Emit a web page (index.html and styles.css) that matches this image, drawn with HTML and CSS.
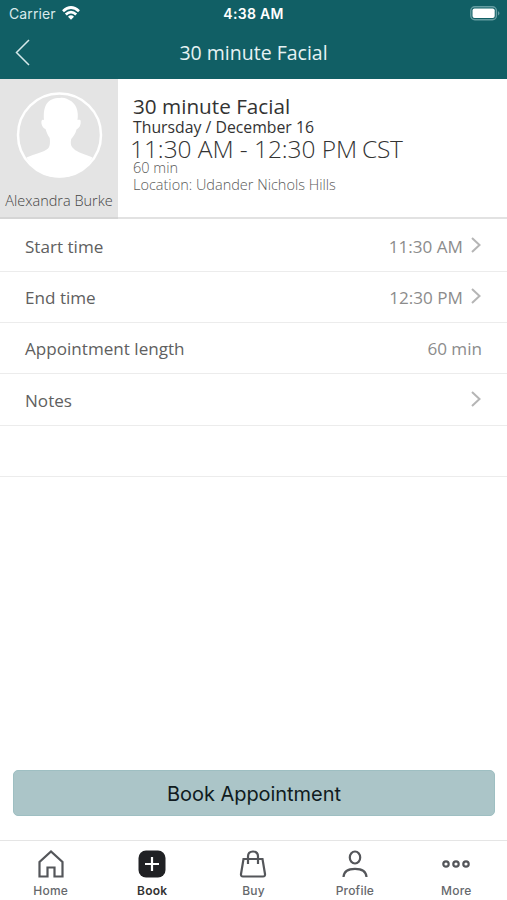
FILE: index.html
```html
<!DOCTYPE html>
<html lang="en">
<head>
<meta charset="utf-8">
<title>30 minute Facial</title>
<link rel="stylesheet" href="styles.css">
</head>
<body>
<div class="app">
  <header class="top">
    <div class="status">
      <div class="carrier"><span>Carrier</span>
        <svg width="18" height="14" viewBox="0 0 18 14" fill="none" stroke="#fff" stroke-width="2.7"><path d="M1 5.2Q9-2.2 17 5.2M3.8 8.6Q9 3.7 14.2 8.6"/><path d="M9 13.8 6 10.700Q9 8 12 10.700Z" fill="#fff" stroke="none"/></svg>
      </div>
      <span class="clock">4:38 AM</span>
      <svg class="battery" width="31" height="15" viewBox="0 0 31 15"><rect x=".8" y=".8" width="25.6" height="13" rx="4" fill="none" stroke="#659da2" stroke-width="1.4"/><rect x="2.5" y="2.6" width="22.2" height="9.4" rx="2" fill="#fff"/><path d="M28 5Q31 7.3 28 9.6Z" fill="#659da2"/></svg>
    </div>
    <div class="navbar">
      <svg class="back" width="15" height="27" viewBox="0 0 15 27" fill="none" stroke="#d5e9ea" stroke-width="1.5"><path d="M14 1 1.5 13.5 14 26"/></svg>
      <span class="nav-title">30 minute Facial</span>
    </div>
  </header>
  <section class="summary">
    <div class="staff">
      <svg width="88" height="88" viewBox="0 0 88 88"><circle cx="44.500" cy="44" r="41.500" fill="none" stroke="#fff" stroke-width="2.500"/><path d="M44.500 86.500C30 86.500 18 79 11.500 66.500C20 62.500 29 61.500 33 57.500C35.500 55 35 50 34.700 47C32.500 44 31.500 41 30.500 38C27.500 37 26 33 26.500 30C27 28.500 28 28.500 29 29C28 15 32 7 45 7C49 6 52 8 54 9C61 12 64 20 62.500 29C64 28.500 65.500 28.500 65.700 30C66 34 64.500 37 61.500 38.500C60.500 43 58.500 45 56.200 48C55.500 52 55.500 55 58.500 57.500C62 61.500 70 63 77.500 66.500C71 79 59 86.500 44.500 86.500Z" fill="#fff"/></svg>
      <span class="staff-name">Alexandra Burke</span>
    </div>
    <div class="details">
      <h1>30 minute Facial</h1>
      <div class="date">Thursday / December 16</div>
      <div class="time">11:30 AM - 12:30 PM<span class="zone">CST</span></div>
      <div class="meta length">60 min</div>
      <div class="meta">Location: Udander Nichols Hills</div>
    </div>
  </section>
  <main class="rows">
    <div class="row"><span>Start time</span><span class="value">11:30 AM</span><svg class="chev" width="10" height="16" viewBox="0 0 10 16"><path d="M1 1 8.500 8 1 15"/></svg></div>
    <div class="row"><span>End time</span><span class="value">12:30 PM</span><svg class="chev" width="10" height="16" viewBox="0 0 10 16"><path d="M1 1 8.500 8 1 15"/></svg></div>
    <div class="row"><span>Appointment length</span><span class="value last">60 min</span></div>
    <div class="row"><span>Notes</span><span class="value"></span><svg class="chev" width="10" height="16" viewBox="0 0 10 16"><path d="M1 1 8.500 8 1 15"/></svg></div>
    <div class="row"></div>
  </main>
  <button class="book"><span>Book Appointment</span></button>
  <nav class="tabs">
    <div class="tab"><svg viewBox="0 0 30 30"><path d="M3.500 27.500V13L15 2.500 26.500 13V27.500H18.500V18.500H11.500V27.500Z"/></svg><span>Home</span></div>
    <div class="tab active"><svg viewBox="0 0 30 30"><rect x="1.500" y="1.500" width="27" height="27" rx="7.500" fill="#202124" stroke="none"/><path d="M15 8V22M8 15H22" stroke="#fff"/></svg><span>Book</span></div>
    <div class="tab"><svg viewBox="0 0 30 30"><path d="M5.500 10H24.500L27 25Q27.300 27.500 25 27.500H5Q2.700 27.500 3 25ZM10 15V7.500Q10 2.500 15 2.500T20 7.500V15"/></svg><span>Buy</span></div>
    <div class="tab"><svg viewBox="0 0 30 30"><ellipse cx="15" cy="8.500" rx="5.200" ry="6"/><path d="M3.500 28Q4 19.800 15 19.800T26.500 28"/></svg><span>Profile</span></div>
    <div class="tab"><svg viewBox="0 0 30 30"><circle cx="5" cy="15" r="2.700"/><circle cx="15" cy="15" r="2.700"/><circle cx="25" cy="15" r="2.700"/></svg><span>More</span></div>
  </nav>
</div>
</body>
</html>
```
FILE: styles.css
```css
* { box-sizing: border-box; }
body { margin: 0; background: #fff; font-family: "Open Sans", sans-serif; }
.app { width: 507px; height: 900px; display: flex; flex-direction: column; overflow: hidden; }
.top { height: 79px; background: #115f65; color: #fff; flex: none; }
.status { height: 28px; padding: 0 6px 0 9px; display: grid; grid-template-columns: 1fr auto 1fr; align-items: center; font-family: Inter, sans-serif; font-size: 14px; line-height: 28px; }
.carrier { display: flex; align-items: center; gap: 6px; color: #d9eaeb; letter-spacing: .1px; }
.carrier svg { margin-top: -2px; }
.clock { font-weight: 600; font-size: 14px; letter-spacing: .3px; margin-left: -3px; }
.battery { justify-self: end; margin-top: -1px; }
.navbar { height: 51px; display: grid; grid-template-columns: 15px 1fr 15px; align-items: center; padding: 0 15px; }
.nav-title { text-align: center; font-size: 19.500px; line-height: 49px; color: #e6f2f3; margin-top: -2px; }
.back { margin-top: -2px; }
.summary { height: 140px; flex: none; display: flex; border-bottom: 2px solid #e2e2e2; }
.staff { width: 118px; height: 140px; background: #e4e4e4; border-bottom: 2px solid #d5d5d5; display: flex; flex-direction: column; align-items: center; padding-top: 12px; color: #444; }
.staff-name { font-size: 14.500px; line-height: 20px; margin-top: 12px; white-space: nowrap; font-weight: 350; }
.details { padding: 14px 0 0 15px; white-space: nowrap; }
h1 { margin: 0; font-weight: 400; font-size: 20.700px; line-height: 26px; color: #333; }
.date { font-size: 15.800px; line-height: 16px; color: #333; }
.time { font-size: 24.500px; line-height: 28px; font-weight: 300; color: #333; margin-left: -3px; letter-spacing: -.06px; }
.zone { margin-left: 5px; letter-spacing: -.4px; }
.meta { font-size: 14.500px; line-height: 17px; color: #5a5a5a; font-weight: 340; }
.length { margin-top: -4px; }
.rows { flex: 1; color: #606060; font-size: 17.100px; padding-top: 1.500px; }
.row { height: 51.300px; border-bottom: 1.500px solid #ececec; padding: 1px 26px 0 25px; display: flex; align-items: center; }
.value { margin-left: auto; margin-right: 8px; color: #8c8c8c; }
.value.last { margin-right: -1px; }
.chev { fill: none; stroke: #b5b5b5; stroke-width: 2; margin-top: -2px; }
.book { flex: none; margin: 0 12px 24px 13px; height: 46px; border: 1px solid #9ebfc2; border-radius: 5px; background: #abc5c8; font-family: Inter, sans-serif; font-size: 20px; letter-spacing: -.05px; color: #101b20; padding: 2px 0 0; }
.tabs { flex: none; height: 60px; border-top: 1.500px solid #e5e5e5; display: grid; grid-template-columns: repeat(5, 1fr); font-family: Inter, sans-serif; color: #66686c; }
.tab { display: flex; flex-direction: column; align-items: center; padding-top: 8px; font-size: 12px; line-height: 14px; font-weight: 500; letter-spacing: .2px; }
.tab svg { width: 30px; height: 30px; fill: none; stroke: #54565a; stroke-width: 2.200; }
.tab span { margin-top: 5px; }
.tab.active { color: #333; font-weight: 600; }
```
